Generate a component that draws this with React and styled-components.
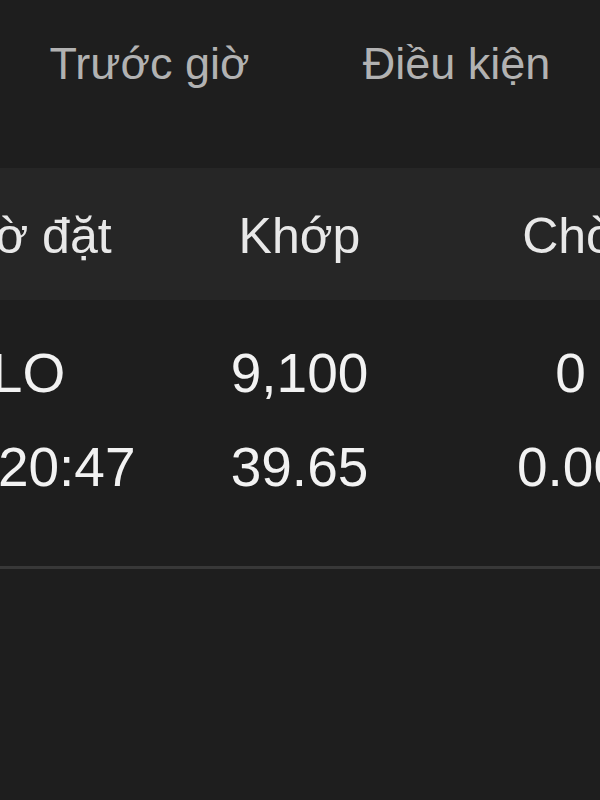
import React from 'react'
import styled, { createGlobalStyle } from 'styled-components'

/*
bg        #1e1e1e
header    #262626
line      #383838
tab text  #b2b2b2
*/

const GlobalStyle = createGlobalStyle`
  html, body {
    margin: 0;
    padding: 0;
    background: #1e1e1e;
  }
  body {
    font-family: 'Liberation Sans', Arial, sans-serif;
    overflow: hidden;
  }
`

const Screen = styled.div`
  width: 600px;
  height: 800px;
  overflow: hidden;
  background: #1e1e1e;
`

const Tabs = styled.div`
  display: grid;
  grid-template-columns: repeat(2, 307px);
  height: 168px;
  box-sizing: border-box;
  padding-top: 41px;
  margin-left: -4px;
`

const Tab = styled.div`
  color: #b2b2b2;
  font-size: 45px;
  line-height: 1;
  text-align: center;
  white-space: nowrap;
`

const Grid = styled.div`
  display: grid;
  grid-template-columns: repeat(3, 271px);
  margin-left: -107px;
  width: 813px;
`

const HeadRow = styled(Grid)`
  height: 132px;
  align-items: center;
  padding-top: 4px;
  box-sizing: border-box;
  background: #262626;
`

const HeadCell = styled.div`
  color: #e8e8e8;
  font-size: 50px;
  line-height: 1;
  text-align: center;
  white-space: nowrap;
`

const Body = styled.div`
  padding: 26px 0 52px;
`

const Row = styled(Grid)`
  height: 94px;
  align-items: center;
`

const Cell = styled.div`
  color: #f2f2f2;
  font-size: 55px;
  line-height: 1;
  text-align: center;
  white-space: nowrap;
`

const Divider = styled.div`
  height: 3px;
  background: #383838;
`

const HEAD = ['Giờ đặt', 'Khớp', 'Chờ']
const ROWS = [
  ['LO', '9,100', '0'],
  ['10:20:47', '39.65', '0.00'],
]

export default function App() {
  return (
    <Screen>
      <GlobalStyle />
      <Tabs>
        <Tab>Trước giờ</Tab>
        <Tab>Điều kiện</Tab>
      </Tabs>
      <HeadRow>
        {HEAD.map((h) => <HeadCell key={h}>{h}</HeadCell>)}
      </HeadRow>
      <Body>
        {ROWS.map((r, i) => (
          <Row key={i}>
            {r.map((c, j) => <Cell key={j}>{c}</Cell>)}
          </Row>
        ))}
      </Body>
      <Divider />
    </Screen>
  )
}
